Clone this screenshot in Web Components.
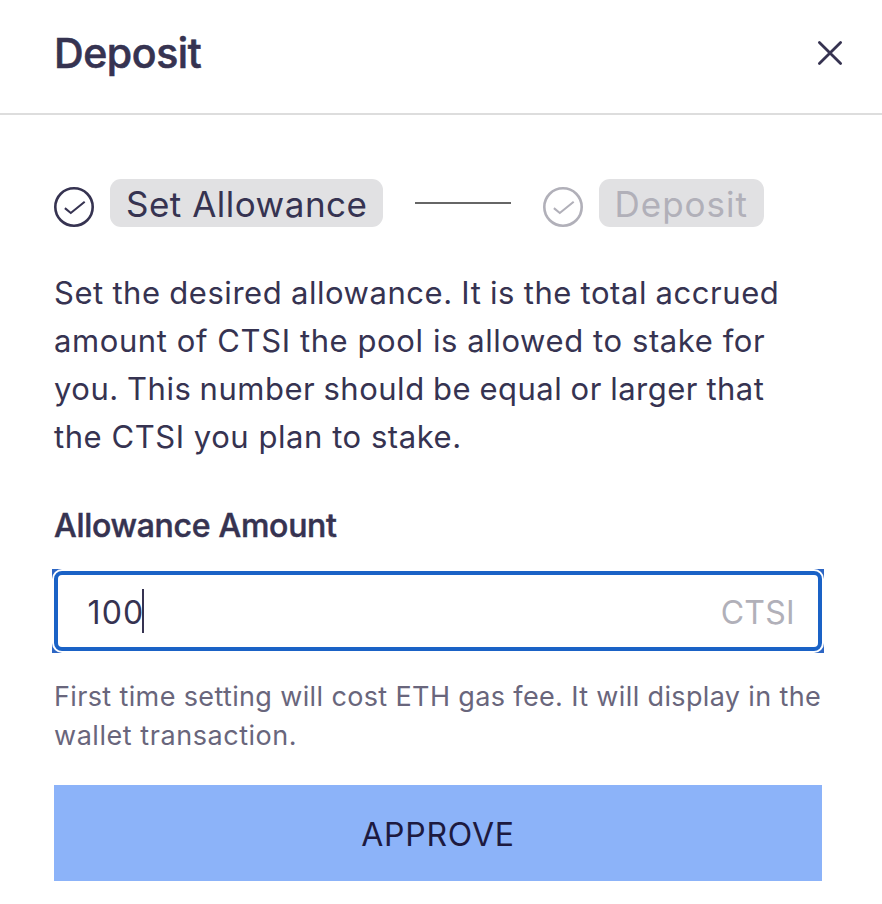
<!DOCTYPE html>
<html lang="en">
<head>
<meta charset="utf-8">
<title>Deposit</title>
<style>
html, body { margin: 0; background: #fff; }
body { font-family: Inter, "Liberation Sans", sans-serif; color: #363351; }
</style>
</head>
<body>
<deposit-dialog></deposit-dialog>
<script>
const define = (name, html) => customElements.define(name, class extends HTMLElement {
  connectedCallback() {
    const template = document.createElement('template');
    template.innerHTML = html;
    this.attachShadow({ mode: 'open' }).append(template.content.cloneNode(true));
  }
});

define('dialog-header', `
<style>
:host { display: flex; justify-content: space-between; height: 113px; border-bottom: 2px solid #ddd; padding: 0 38px 0 54px; }
h1 { margin: 23px 0 0; font-size: 41px; line-height: 60px; font-weight: 500; letter-spacing: -.4px; -webkit-text-stroke: .6px currentColor; }
button { all: unset; width: 28px; height: 28px; margin-top: 39px; }
svg { display: block; }
</style>
<h1><slot></slot></h1>
<button aria-label="Close"><svg width="28" height="28" viewBox="0 0 28 28" fill="none" stroke="currentColor" stroke-width="2.8" stroke-linecap="round"><path d="M3.4 3.4 24.6 24.6M24.6 3.4 3.4 24.6"/></svg></button>`);

define('step-item', `
<style>
:host { display: flex; align-items: flex-start; color: #363351; --tracking: .5px; --pad: 16px; }
:host([pending]) { color: #b1b0b9; --tracking: 1px; --pad: 15.5px; }
svg { margin: 8px 16px 0 0; flex: none; }
span { box-sizing: border-box; width: var(--chip); height: 48px; padding: 1px 0 0 var(--pad); border-radius: 11px; background: #e1e1e3; font-size: 35px; line-height: 48px; letter-spacing: var(--tracking); white-space: nowrap; }
</style>
<svg width="40" height="40" viewBox="0 0 40 40" fill="none" stroke="currentColor"><circle cx="20" cy="20" r="18.7" stroke-width="2.6"/><path d="M10.9 21.1 16.8 26 30.7 14.7" stroke-width="2.1"/></svg>
<span><slot></slot></span>`);

define('step-bar', `
<style>
:host { display: flex; align-items: flex-start; height: 48px; }
i { width: 96px; height: 2px; margin: 23px 32px 0; background: #666; }
step-item:first-of-type { --chip: 273px; }
step-item:last-of-type { --chip: 165px; }
</style>
<step-item>Set Allowance</step-item><i></i><step-item pending>Deposit</step-item>`);

define('text-line', `
<style>:host { display: block; white-space: nowrap; }</style><slot></slot>`);

define('amount-field', `
<style>
:host { display: block; margin: 0 -2px; background: #2d66c4; }
.ring { background: #fff; border-radius: 10px; padding: 2px; }
.box { box-sizing: border-box; height: 80px; display: flex; align-items: center; justify-content: space-between; border: 4px solid #1a62c6; border-radius: 8px; padding: 0 23px 0 29.5px; font-size: 32px; line-height: 44px; }
.value { display: flex; align-items: center; padding-top: 4px; letter-spacing: 1.15px; }
.value i { width: 2px; height: 44px; margin: -4px 0 0 -2px; background: #363351; }
.unit { color: #b1b0b9; padding-top: 4px; letter-spacing: .3px; }
</style>
<div class="ring"><div class="box"><div class="value"><slot></slot><i></i></div><span class="unit"><slot name="unit"></slot></span></div></div>`);

define('primary-button', `
<style>
:host { display: block; }
button { all: unset; box-sizing: border-box; width: 100%; height: 96px; padding-top: 2px; background: #8cb3f9; color: #1d1a40; text-align: center; font-size: 32px; line-height: 96px; letter-spacing: .75px; }
</style>
<button><slot></slot></button>`);

define('deposit-dialog', `
<style>
:host { display: block; width: 882px; height: 904px; overflow: hidden; background: #fff; }
main { display: flex; flex-direction: column; padding: 64px 60px 0 54px; }
.intro { margin-top: 42px; font-size: 31px; line-height: 48px; }
.intro text-line:nth-child(1) { letter-spacing: .55px; word-spacing: -.6px; }
.intro text-line:nth-child(2) { letter-spacing: .592px; }
.intro text-line:nth-child(3) { letter-spacing: .5px; word-spacing: -.85px; }
.intro text-line:nth-child(4) { letter-spacing: .55px; }
h2 { margin: 41px 0 19px; font-size: 32px; line-height: 48px; font-weight: 500; letter-spacing: -.28px; -webkit-text-stroke: .5px currentColor; }
.help { margin: 24px 0 30px; font-size: 27px; line-height: 39px; color: #69667c; }
.help text-line:nth-child(1) { letter-spacing: .365px; }
.help text-line:nth-child(2) { letter-spacing: .55px; }
</style>
<dialog-header>Deposit</dialog-header>
<main>
<step-bar></step-bar>
<div class="intro"><text-line>Set the desired allowance. It is the total accrued</text-line><text-line>amount of CTSI the pool is allowed to stake for</text-line><text-line>you. This number should be equal or larger that</text-line><text-line>the CTSI you plan to stake.</text-line></div>
<h2>Allowance Amount</h2>
<amount-field>100<span slot="unit">CTSI</span></amount-field>
<div class="help"><text-line>First time setting will cost ETH gas fee. It will display in the</text-line><text-line>wallet transaction.</text-line></div>
<primary-button>APPROVE</primary-button>
</main>`);
</script>
</body>
</html>
